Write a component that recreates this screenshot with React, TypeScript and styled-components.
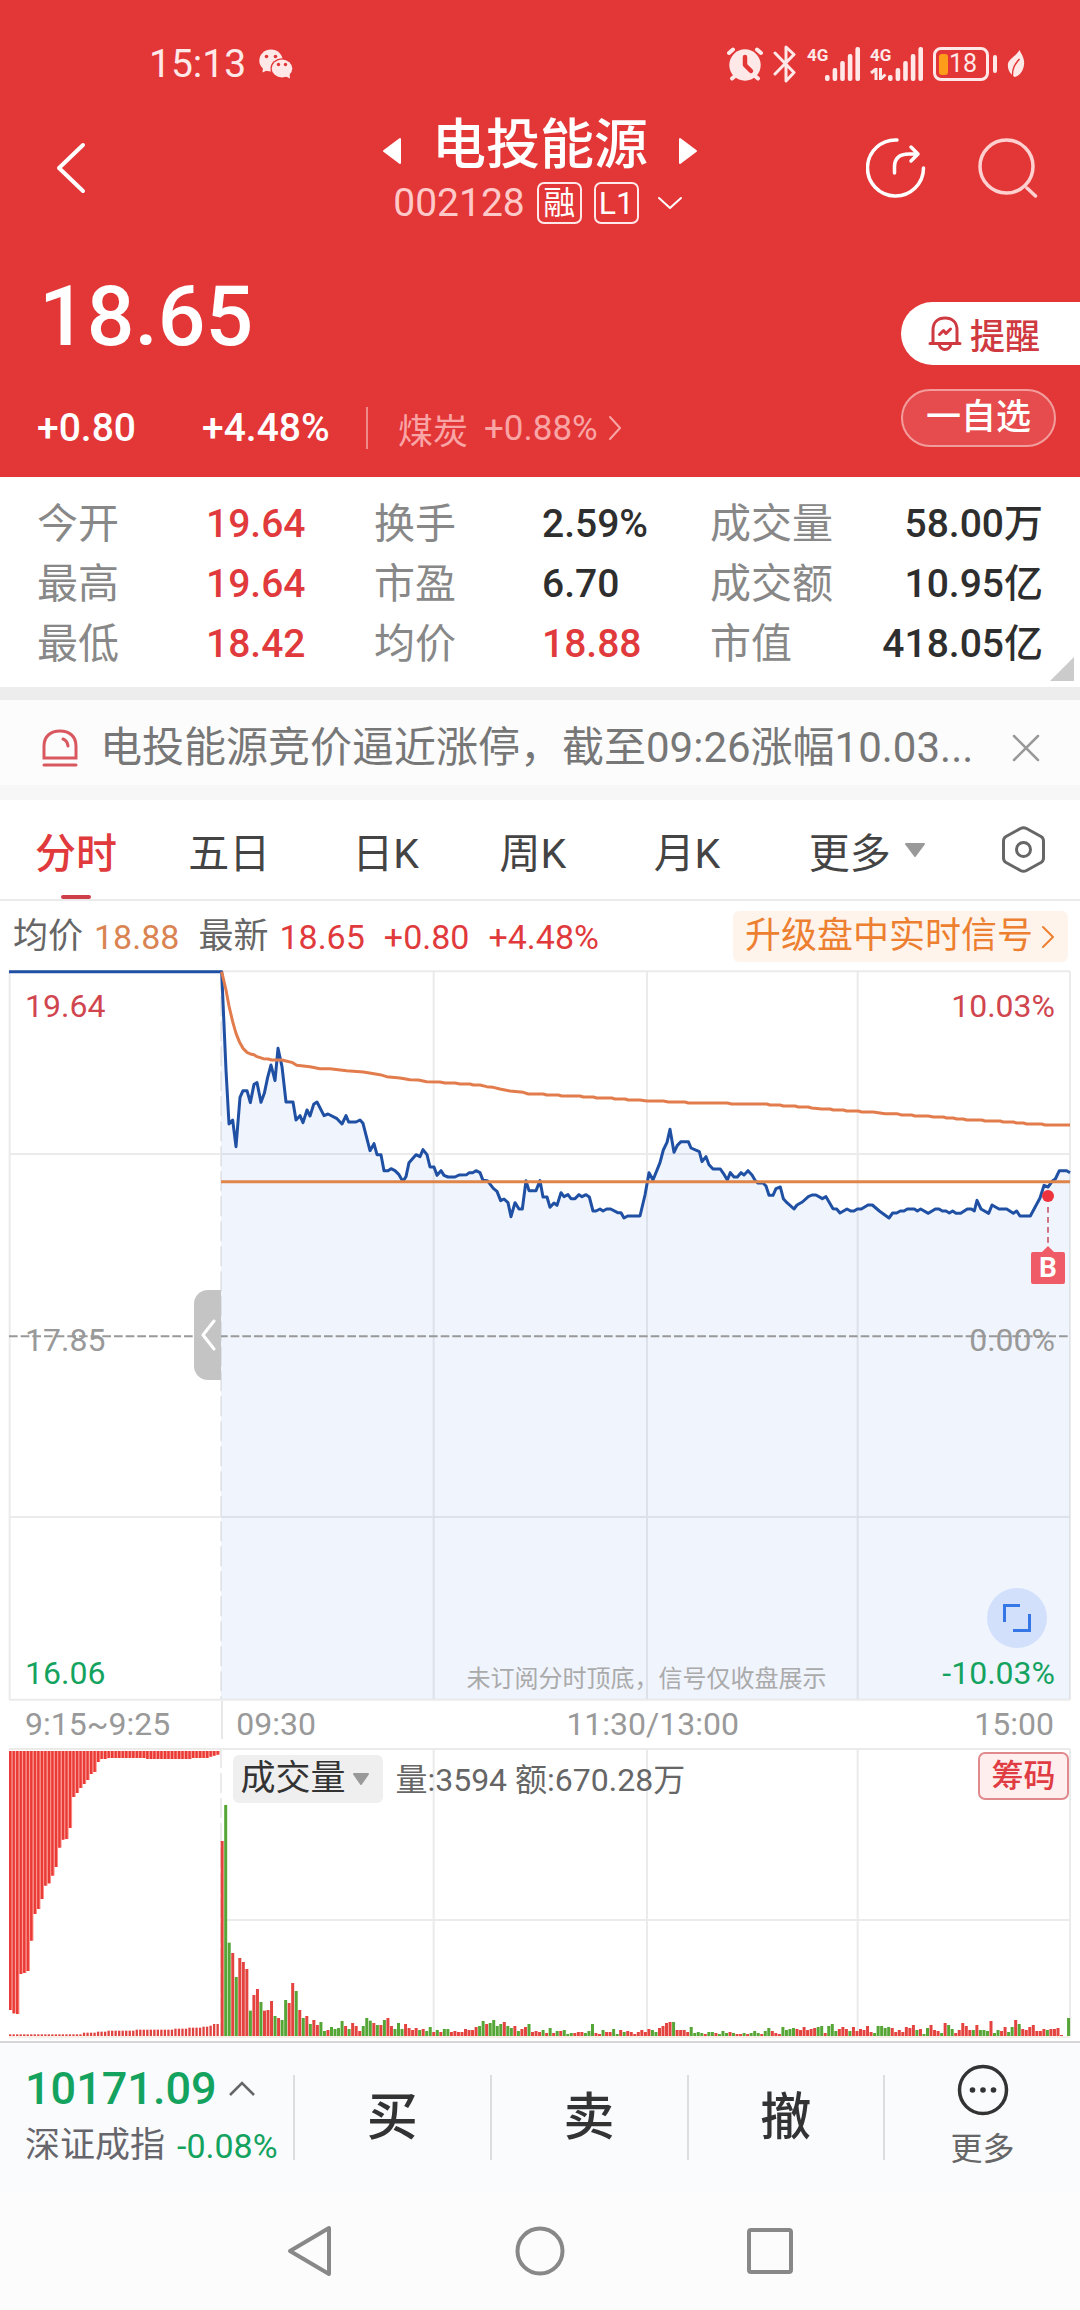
import React from "react";
import styled, { createGlobalStyle } from "styled-components";

/* ---------- data ---------- */

const RED = "#e13a3c";
const GREEN = "#14a35f";

type Tone = "red" | "dark";
type Stat = { label: string; value: string; tone: Tone };

const STATS: Stat[][] = [
  [
    { label: "今开", value: "19.64", tone: "red" },
    { label: "换手", value: "2.59%", tone: "dark" },
    { label: "成交量", value: "58.00万", tone: "dark" },
  ],
  [
    { label: "最高", value: "19.64", tone: "red" },
    { label: "市盈", value: "6.70", tone: "dark" },
    { label: "成交额", value: "10.95亿", tone: "dark" },
  ],
  [
    { label: "最低", value: "18.42", tone: "red" },
    { label: "均价", value: "18.88", tone: "red" },
    { label: "市值", value: "418.05亿", tone: "dark" },
  ],
];

const TABS = ["分时", "五日", "日K", "周K", "月K"];

/* Chart drawings use three units for each pixel of a 1080-pixel wide page. */
const W = 3240;
const LEFT = 27;
const OPEN = 663;
const RIGHT = 3210;
const COLS = [1301, 1941, 2573];

const PRICE_AM =
  "65,35 78,330 87,492 98,480 108,560 120,412 129,392 141,392 151,428 162,373 171,368 183,427 193,400 203,352 213,315 225,362 234,265 246,320 258,426 279,426 288,480 300,467 309,488 321,450 330,468 341,433 351,426 372,467 384,462 411,476 426,492 438,467 446,486 468,486 480,480 489,490 510,572 522,551 531,584 543,584 552,632 564,632 573,626 585,632 597,644 606,660 612,659 618,650 627,608 648,584 660,590 669,569 681,584 690,621 702,621 711,646 723,632 732,646 744,651 765,651 777,645 800,644 808,638 818,638 828,632 840,638 849,661 862,662 880,685 891,694 902,722 912,717 924,728 933,770 945,728 957,747 967,747 978,662 987,692 1008,692 1020,662 1029,711 1041,711 1050,742 1062,729 1071,736 1083,698 1092,710 1104,704 1113,716 1125,716 1137,704 1146,710 1158,704 1168,711 1179,753 1188,753 1200,747 1209,753 1220,747 1232,747 1253,758 1263,758 1272,774 1283,768 1314,768";
const PRICE_PM =
  "0,768 15,705 27,638 39,660 60,608 70,570 81,547 90,508 102,577 112,556 123,545 145,545 153,564 178,575 186,605 198,590 207,614 219,627 241,627 250,640 262,660 271,638 282,651 292,651 303,638 312,645 324,632 336,645 346,662 354,669 369,669 378,678 387,706 399,706 408,686 421,681 430,716 441,728 462,747 471,735 487,726 505,710 516,705 528,705 547,716 558,710 579,746 590,747 600,759 621,747 632,753 642,753 652,747 664,747 684,735 697,735 718,753 747,774 758,759 770,759 781,753 792,753 802,747 823,747 832,753 842,747 865,760 886,747 897,747 907,753 918,753 928,759 938,753 948,760 962,760 982,747 994,747 1003,753 1011,721 1023,747 1046,760 1056,735 1077,747 1100,747 1120,760 1130,753 1140,768 1171,768 1200,714 1212,676 1224,681 1238,662 1246,657 1258,632 1280,632 1290,638";
const AVERAGE_AM =
  "65,35 78,90 87,138 98,185 108,220 118,245 129,265 141,277 151,282 162,284 171,290 190,296 205,297 215,300 246,300 278,308 290,316 330,320 360,326 390,326 440,332 490,336 540,344 560,350 600,354 630,359 655,360 680,365 720,366 735,369 765,369 780,372 810,372 820,375 840,375 860,380 880,382 900,387 930,393 970,397 985,402 1030,402 1040,405 1075,405 1085,408 1140,408 1150,411 1180,411 1190,414 1235,414 1245,417 1275,417 1285,420 1320,420";
const AVERAGE_PM =
  "20,423 70,423 85,426 135,426 145,429 262,429 275,432 380,432 390,435 420,435 430,438 465,438 475,441 505,441 515,444 545,447 570,447 580,450 610,450 620,453 655,453 665,456 700,456 735,461 770,461 785,465 815,465 825,468 865,468 880,471 910,471 920,474 940,474 950,477 970,477 980,480 1025,480 1035,483 1080,483 1090,486 1120,486 1130,489 1150,489 1160,492 1205,492 1215,495 1290,495";

const shift = (points: string, dx: number, dy: number) =>
  points
    .split(" ")
    .map((p) => {
      const [x, y] = p.split(",").map(Number);
      return `${x + dx},${y + dy}`;
    })
    .join(" ");

const PRICE = `${LEFT},5 ${shift(PRICE_AM, 600, -30)} ${shift(PRICE_PM, 1920, -30)}`;
const AVERAGE = `${shift(AVERAGE_AM, 600, -30)} ${shift(AVERAGE_PM, 1920, -30)}`;
const PRICE_AREA = `${OPEN},5 ${shift(PRICE_AM, 600, -30)} ${shift(PRICE_PM, 1920, -30)} ${RIGHT},2187 ${OPEN},2187`;

/* Each minute: colour of the bar and the level of its top. */
const VOLUME =
  "R303 G195 G608 R639 G711 R654 R666 R687 G812 R765 R747 G786 R812 R810 R783 G828 R834 G840 G780 R789 R729 G753 R810 G834 R828 G852 R840 R855 G846 G873 R870 G861 G867 G864 G843 R858 G867 R849 R858 R873 G858 G834 G842 R849 G855 R855 G840 R834 R858 G867 G849 G867 R852 R864 R870 R864 G870 R867 G873 G861 R876 G870 R876 G867 G867 R876 R873 R876 R876 R867 R870 R870 R861 G858 G843 R852 G849 G840 G858 G852 R846 G858 G864 R858 G873 R867 R861 G852 R876 R873 R876 G870 R879 G864 R879 G873 R873 G870 G882 G879 R879 R876 R876 G879 G873 G852 R879 R882 G870 R876 R876 G867 G882 R870 G876 R873 R876 R882 R876 R870 R876 R867 G870 G876 R864 R858 R849 R846 G846 R870 R870 R870 R876 G861 G879 G876 G879 R882 G876 G876 R879 G882 G873 G879 R876 G879 R882 R882 G879 R882 G879 G873 G879 R882 G873 G864 R873 R879 R882 G861 G870 G867 G864 R867 R870 R861 R870 R867 R864 G861 G858 R879 G858 G852 G873 R867 R861 R867 G873 R861 R873 R867 R870 R858 R876 G879 G858 G858 G864 G861 R864 R876 R870 R876 R861 R864 R855 G870 R867 G882 G864 R855 R870 R873 G879 R849 G855 G867 R879 R870 R849 R858 R870 G870 R855 G870 G870 G873 R843 G879 G870 R873 R861 G876 G861 R840 G852 R867 R870 R861 R855 R873 R873 R867 G870 R867 R867 R864 R885 R888 G834"
    .split(" ")
    .map((b) => ({ up: b[0] === "R", top: Number(b.slice(1)) }));

const AUCTION_TOP = [
  810, 820, 822, 702, 699, 693, 602, 522, 507, 477, 437, 430, 407, 381, 323, 299, 297, 264, 171, 159,
  144, 132, 120, 102, 96, 66, 57, 57, 54, 54, 54, 54, 54, 54, 54, 54, 54, 54, 54, 57,
  57, 57, 57, 57, 57, 57, 57, 57, 57, 57, 57, 57, 54, 54, 54, 54, 54, 50, 47, 44,
];
const AUCTION_BOTTOM = AUCTION_TOP.map((_, i) => {
  const steps: [number, number][] = [
    [21, 883], [25, 878], [28, 875], [36, 872], [47, 869], [51, 866], [55, 863], [57, 860], [58, 857],
  ];
  const hit = steps.find(([end]) => i < end);
  return hit ? hit[1] : 852;
});

/* ---------- page ---------- */

const Global = createGlobalStyle`
  *, *::before, *::after { box-sizing: border-box; }
  body {
    margin: 0;
    background: #fcfcfc;
    font-family: Roboto, "Noto Sans CJK SC", sans-serif;
    color: #333;
  }
  button, h1, p { margin: 0; padding: 0; font: inherit; }
  button { border: 0; background: none; color: inherit; cursor: pointer; white-space: nowrap; }
  svg { display: block; flex: none; }
`;

const Page = styled.div`
  display: flex;
  flex-direction: column;
  background: #fff;
`;

/* ---------- header ---------- */

const Header = styled.header`
  background: #e33637;
  color: #fff;
`;

const StatusBar = styled.div`
  display: flex;
  align-items: center;
  justify-content: space-between;
  height: 104px;
  padding: 24px 55px 0 149px;
  color: #ffe8e8;
`;

const StatusGroup = styled.div<{ $gap: number }>`
  display: flex;
  align-items: center;
  gap: ${(p) => p.$gap}px;
`;

const Clock = styled.time`
  font-size: 39px;
  line-height: 44px;
`;

const Signal = styled.div`
  display: flex;
  align-items: flex-end;
`;

const Network = styled.div`
  display: flex;
  flex-direction: column;
  height: 34px;
  width: 18px;
  gap: 4px;
  font-size: 17px;
  line-height: 17px;
  font-weight: 700;
`;

const Battery = styled.div`
  display: flex;
  align-items: center;
  gap: 4px;
  &::after {
    content: "";
    width: 4px;
    height: 18px;
    border-radius: 2px;
    background: #ffe8e8;
  }
`;

const BatteryBody = styled.div`
  display: flex;
  align-items: center;
  width: 56px;
  height: 34px;
  padding: 0 3px;
  border: 3px solid #ffe8e8;
  border-radius: 8px;
  font-size: 25px;
  line-height: 28px;
  &::before {
    content: "";
    width: 9px;
    height: 21px;
    margin-right: 1px;
    border-radius: 3px;
    background: #ff9c1a;
  }
`;

const NavRow = styled.nav`
  display: grid;
  grid-template-columns: 1fr auto 1fr;
  align-items: center;
  height: 128px;
  padding: 0 42px;
`;

const IconButton = styled.button`
  display: flex;
  align-items: center;
  justify-content: center;
`;

const BackButton = styled(IconButton)`
  padding-left: 13px;
`;

const StepButton = styled(IconButton)`
  padding-top: 10px;
`;

const NavActions = styled.div`
  display: flex;
  justify-content: flex-end;
  gap: 52px;
`;

const TitleBlock = styled.div`
  display: flex;
  flex-direction: column;
  align-items: center;
  gap: 6px;
  padding-top: 4px;
`;

const TitleRow = styled.div`
  display: flex;
  align-items: center;
  gap: 30px;
`;

const Title = styled.h1`
  font-size: 54px;
  line-height: 60px;
  font-weight: 500;
`;

const CodeRow = styled.div`
  display: flex;
  align-items: center;
  gap: 12px;
`;

const Code = styled.span`
  font-size: 39px;
  line-height: 42px;
  color: #ffc9c9;
`;

const Badge = styled.span`
  display: flex;
  align-items: center;
  justify-content: center;
  width: 45px;
  height: 42px;
  border: 2px solid #ffe8e8;
  border-radius: 7px;
  font-size: 32px;
  line-height: 36px;
`;

const Quote = styled.section`
  display: flex;
  justify-content: space-between;
  padding: 40px 0 28px 37px;
`;

const Price = styled.div`
  padding-left: 2px;
  font-size: 84px;
  line-height: 90px;
  font-weight: 500;
`;

const ChangeRow = styled.div`
  display: flex;
  align-items: center;
  height: 42px;
  margin-top: 45px;
  font-size: 39px;
  font-weight: 500;
`;

const Change = styled.span<{ $width: number }>`
  width: ${(p) => p.$width}px;
`;

const Sector = styled.a`
  display: flex;
  align-items: center;
  gap: 10px;
  height: 42px;
  padding-left: 30px;
  border-left: 2px solid #f08a8a;
  color: #f9a5a6;
  font-size: 35px;
  font-weight: 400;
  text-decoration: none;
`;

const SectorName = styled.span`
  margin-right: 6px;
`;

const QuoteActions = styled.div`
  display: flex;
  flex-direction: column;
  gap: 24px;
  width: 179px;
  padding-top: 30px;
`;

const AlertButton = styled.button`
  display: flex;
  align-items: center;
  gap: 8px;
  height: 63px;
  padding-left: 27px;
  border-radius: 32px 0 0 32px;
  background: #fff;
  color: #cf3a41;
  font-size: 35px;
  font-weight: 500;
`;

const WatchButton = styled.button`
  width: 155px;
  height: 58px;
  border: 2px solid #f39c9c;
  border-radius: 29px;
  background: #e64c4d;
  font-size: 35px;
  line-height: 54px;
  font-weight: 500;
`;

/* ---------- statistics ---------- */

const StatsPanel = styled.section`
  position: relative;
  padding: 17px 37px 13px;
  border-bottom: 13px solid #ededed;
  &::after {
    content: "";
    position: absolute;
    right: 6px;
    bottom: 6px;
    border-style: solid;
    border-width: 0 0 24px 24px;
    border-color: transparent transparent #cbcbcb transparent;
  }
`;

const StatsTable = styled.table`
  width: 100%;
  table-layout: fixed;
  border-collapse: collapse;
`;

const StatLabel = styled.th`
  height: 60px;
  padding: 0;
  color: #888;
  font-size: 41px;
  line-height: 60px;
  font-weight: 400;
  text-align: left;
  white-space: nowrap;
`;

const StatValue = styled.td<{ $tone: Tone; $end: boolean }>`
  padding: 0;
  color: ${(p) => (p.$tone === "red" ? RED : "#2e2e2e")};
  font-size: 39px;
  line-height: 60px;
  font-weight: 500;
  text-align: ${(p) => (p.$end ? "right" : "left")};
  white-space: nowrap;
`;

/* ---------- notice ---------- */

const Notice = styled.section`
  display: flex;
  align-items: center;
  height: 100px;
  padding: 10px 40px 0 42px;
  border-bottom: 15px solid #f7f7f7;
  background: #fcfcfc;
`;

const NoticeText = styled.p`
  flex: 1;
  min-width: 0;
  margin: 0 22px;
  overflow: hidden;
  color: #777;
  font-size: 42px;
  line-height: 60px;
  white-space: nowrap;
  text-overflow: ellipsis;
`;

/* ---------- tabs ---------- */

const Tabs = styled.nav`
  display: grid;
  grid-template-columns: 153fr 164fr 147fr 154fr 155fr 193fr auto;
  height: 101px;
  padding: 0 35px;
  border-bottom: 2px solid #ebebeb;
`;

const Tab = styled.button<{ $active?: boolean }>`
  position: relative;
  justify-self: start;
  display: flex;
  align-items: center;
  gap: 14px;
  color: ${(p) => (p.$active ? RED : "#444")};
  font-size: 41px;
  font-weight: ${(p) => (p.$active ? 500 : 400)};
  &::after {
    content: "";
    display: ${(p) => (p.$active ? "block" : "none")};
    position: absolute;
    left: 50%;
    bottom: 0;
    width: 30px;
    height: 4px;
    margin-left: -15px;
    border-radius: 2px;
    background: #cf3f49;
  }
`;

/* ---------- legend ---------- */

const Legend = styled.div`
  display: flex;
  align-items: center;
  justify-content: space-between;
  height: 69px;
  padding: 2px 12px 0 13px;
`;

const LegendItems = styled.div`
  display: flex;
  align-items: center;
  gap: 19px;
  color: ${RED};
  font-size: 34px;
  line-height: 50px;
`;

const LegendItem = styled.span<{ $color?: string }>`
  display: flex;
  gap: 11px;
  color: ${(p) => p.$color ?? RED};
`;

const LegendName = styled.span`
  color: #666;
  font-size: 35px;
`;

const UpgradeLink = styled.a`
  display: flex;
  align-items: center;
  gap: 8px;
  height: 51px;
  padding: 0 13px 0 12px;
  border-radius: 6px;
  background: #fff4ec;
  color: #ec8030;
  font-size: 36px;
  line-height: 51px;
  text-decoration: none;
`;

/* ---------- charts ---------- */

const ChartFrame = styled.section<{ $height: number }>`
  position: relative;
  height: ${(p) => p.$height}px;
`;

const Plot = styled.svg`
  width: 100%;
  height: 100%;
`;

const Overlay = styled.div`
  position: absolute;
  inset: 0 25px;
  display: flex;
  flex-direction: column;
  justify-content: space-between;
  padding: 16px 0 8px;
`;

const Level = styled.div<{ $color: string }>`
  display: flex;
  align-items: center;
  justify-content: space-between;
  color: ${(p) => p.$color};
  font-size: 32px;
  line-height: 40px;
`;

const Watermark = styled.p`
  position: absolute;
  left: 43%;
  bottom: 8px;
  padding-left: 2px;
  color: #aaa;
  font-size: 24px;
  line-height: 28px;
`;

const Handle = styled.button`
  position: absolute;
  top: 320px;
  right: 79.5%;
  display: flex;
  align-items: center;
  justify-content: flex-end;
  width: 27px;
  height: 90px;
  padding-right: 5px;
  border-radius: 14px 0 0 14px;
  background: #c4c4c4;
  color: #fff;
`;

const ExpandButton = styled.button`
  position: absolute;
  right: 33px;
  bottom: 53px;
  display: flex;
  align-items: center;
  justify-content: center;
  width: 60px;
  height: 60px;
  border-radius: 50%;
  background: #d2e0fc;
`;

const TradeFlag = styled.div`
  position: absolute;
  top: 282px;
  right: 15px;
  width: 34px;
  height: 32px;
  border-radius: 2px;
  background: #ef5b67;
  color: #fff;
  font-size: 28px;
  line-height: 32px;
  font-weight: 700;
  text-align: center;
  &::before {
    content: "";
    position: absolute;
    left: 11px;
    top: -6px;
    border-style: solid;
    border-width: 0 6px 6px;
    border-color: transparent transparent #ef5b67;
  }
`;

const TimeAxis = styled.div`
  display: grid;
  grid-template-columns: 20.5% 1fr auto 1fr;
  align-items: center;
  height: 47px;
  padding-right: 10px;
  color: #999;
  font-size: 32px;
  line-height: 47px;
  background: linear-gradient(#e8e8e8, #e8e8e8) 20.5% 0 / 2px 38px no-repeat;
`;

const TimeLabel = styled.span<{ $place: "first" | "open" | "mid" | "close" }>`
  padding: ${(p) => ({ first: "0 0 0 25px", open: "0 0 0 17px", mid: "0 0 0 16px", close: "0 16px 0 0" })[p.$place]};
  text-align: ${(p) => (p.$place === "close" ? "right" : "left")};
`;

const VolumeHead = styled.div`
  position: absolute;
  top: 4px;
  left: calc(20.5% + 12px);
  right: 11px;
  display: flex;
  align-items: flex-start;
`;

const IndicatorButton = styled.button`
  display: flex;
  align-items: center;
  gap: 8px;
  height: 48px;
  margin-top: 3px;
  padding: 0 14px 0 7px;
  border-radius: 6px;
  background: #efefef;
  font-size: 35px;
  line-height: 48px;
`;

const VolumeText = styled.p`
  padding: 4px 0 0 12px;
  color: #666;
  font-size: 32px;
  line-height: 48px;
`;

const ChipsButton = styled.button`
  width: 91px;
  height: 48px;
  margin-left: auto;
  border: 2px solid #e08a8d;
  border-radius: 7px;
  background: #ffeeee;
  color: #df3c44;
  font-size: 32px;
  line-height: 44px;
  font-weight: 500;
`;

/* ---------- bottom ---------- */

const ActionBar = styled.footer`
  display: grid;
  grid-template-columns: 293px repeat(4, 1fr);
  grid-template-rows: 85px;
  height: 151px;
  padding: 32px 0;
  border-top: 2px solid #d6d6da;
  background: #fafbfd;
`;

const IndexButton = styled.button`
  display: flex;
  flex-direction: column;
  justify-content: center;
  gap: 11px;
  padding-left: 25px;
`;

const IndexLine = styled.span<{ $size: number }>`
  display: flex;
  align-items: center;
  gap: 12px;
  color: ${GREEN};
  font-size: ${(p) => p.$size}px;
  line-height: 46px;
  font-weight: ${(p) => (p.$size > 40 ? 500 : 400)};
`;

const IndexName = styled.span`
  color: #66666c;
  font-size: 35px;
`;

const TradeButton = styled.button`
  border-left: 2px solid #dcdde0;
  color: #333;
  font-size: 51px;
  line-height: 85px;
  font-weight: 500;
`;

const MoreButton = styled.button`
  display: flex;
  flex-direction: column;
  align-items: center;
  justify-content: center;
  gap: 11px;
  border-left: 2px solid #dcdde0;
  color: #666;
  font-size: 32px;
  line-height: 44px;
`;

const SystemBar = styled.nav`
  display: flex;
  align-items: center;
  justify-content: center;
  gap: 182px;
  height: 118px;
  background: #fcfcfc;
`;

/* ---------- drawings ---------- */

const Chevron = ({ w, h, d, width = 3 }: { w: number; h: number; d: string; width?: number }) => (
  <svg width={w} height={h} viewBox={`0 0 ${w} ${h}`} fill="none" stroke="currentColor" strokeWidth={width} strokeLinecap="round" strokeLinejoin="round" aria-hidden="true">
    <path d={d} />
  </svg>
);

const Triangle = ({ w, h, points, color = "currentColor" }: { w: number; h: number; points: string; color?: string }) => (
  <svg width={w} height={h} viewBox={`0 0 ${w} ${h}`} aria-hidden="true">
    <polygon points={points} fill={color} stroke={color} strokeWidth="2" strokeLinejoin="round" />
  </svg>
);

const WechatIcon = () => (
  <svg width="34" height="30" viewBox="0 0 34 30" aria-hidden="true">
    <path d="M4 18 L3.5 23.5 L9 21 Z" fill="currentColor" />
    <ellipse cx="12" cy="11.5" rx="11.7" ry="11" fill="currentColor" />
    <ellipse cx="23" cy="19.5" rx="11.5" ry="10.2" fill="#e33637" />
    <ellipse cx="23" cy="19.5" rx="10.3" ry="9" fill="currentColor" />
    <path d="M26 27 L31 29.5 L30.5 24 Z" fill="currentColor" />
    <g fill="#e33637">
      <circle cx="7.5" cy="7.5" r="1.8" />
      <circle cx="16.5" cy="7.5" r="1.8" />
      <circle cx="19.5" cy="15.5" r="1.7" />
      <circle cx="26.5" cy="15.5" r="1.7" />
    </g>
  </svg>
);

const AlarmIcon = () => (
  <svg width="36" height="35" viewBox="0 0 36 35" fill="none" stroke="currentColor" strokeLinecap="round" aria-hidden="true">
    <circle cx="18" cy="18" r="15.7" fill="currentColor" stroke="none" />
    <path d="M2 6 L6 2.5 M34 6 L30 2.5" strokeWidth="4" />
    <path d="M5 31.5 L8 29 M31 31.5 L28 29" strokeWidth="4" />
    <path d="M18 10 V18 L24 24" stroke="#e33637" strokeWidth="4.5" strokeLinejoin="round" />
  </svg>
);

const BluetoothIcon = () => (
  <svg width="24" height="38" viewBox="0 0 24 38" fill="none" stroke="currentColor" strokeWidth="3" strokeLinecap="round" strokeLinejoin="round" aria-hidden="true">
    <path d="M2 8 L21 27.5 L13 36 V2 L21 9.5 L2 29" />
  </svg>
);

const BarsIcon = () => (
  <svg width="35" height="34" viewBox="0 0 35 34" fill="currentColor" aria-hidden="true">
    {[6, 13, 20, 27, 34].map((h, i) => (
      <rect key={h} x={i * 7.6} y={34 - h} width="4.6" height={h} rx="2" />
    ))}
  </svg>
);

const DataArrows = () => (
  <svg width="17" height="12" viewBox="0 0 17 12" fill="none" stroke="currentColor" strokeWidth="3" aria-hidden="true">
    <path d="M1 5 L6 1 V12 M10.5 0 V11 L15.5 6.5" />
  </svg>
);

const LeafIcon = () => (
  <svg width="18" height="28" viewBox="0 0 18 28" aria-hidden="true">
    <path d="M12.5 0 C14 4 18 8 17 15 C16 22 12 26 7.5 27 C5 25 0 21 1 13.5 C2 9 10 5 12.5 0 Z" fill="currentColor" />
    <path d="M12.5 9 C8 14 5 18 5.5 27" fill="none" stroke="#e33637" strokeWidth="1.5" />
  </svg>
);

const ShareIcon = () => (
  <svg width="60" height="60" viewBox="0 0 60 60" fill="none" stroke="#fff" strokeWidth="3.5" strokeLinecap="round" strokeLinejoin="round" aria-hidden="true">
    <path d="M31 2 A28 28 0 1 0 57.5 30" />
    <path d="M28.5 35 V29 C28.5 20 34 16 43 16 H52 M45 9 L52 16 L45 23" />
  </svg>
);

const SearchIcon = () => (
  <svg width="60" height="60" viewBox="0 0 60 60" fill="none" stroke="#ffd0d0" strokeWidth="3.5" strokeLinecap="round" aria-hidden="true">
    <circle cx="28.5" cy="28.5" r="26.5" />
    <path d="M49 50 L57.5 58" />
  </svg>
);

const BellIcon = () => (
  <svg width="34" height="35" viewBox="0 0 34 35" fill="none" stroke="currentColor" strokeWidth="3" strokeLinecap="round" strokeLinejoin="round" aria-hidden="true">
    <path d="M2 27.5 H32 M5 27 V14 C5 6 10 2 17 2 C24 2 29 6 29 14 V27" />
    <path d="M11 28 C12 32 14 33.5 17 33.5 C20 33.5 22 32 23 28" />
    <path d="M11.5 18.5 L15.5 14.5 L18 17.5 L22.5 13" />
  </svg>
);

const SirenIcon = () => (
  <svg width="36" height="38" viewBox="0 0 36 38" fill="none" stroke="#d9585f" strokeWidth="3" strokeLinecap="round" aria-hidden="true">
    <path d="M2 29 V17 C2 7 9 2 18 2 C27 2 34 7 34 17 V29 Z M2 36 H34" />
    <path d="M21 10 C24 11 25.5 13 26 17" />
  </svg>
);

const HexIcon = () => (
  <svg width="43" height="47" viewBox="0 0 43 47" fill="none" stroke="#666" strokeWidth="3" strokeLinejoin="round" aria-hidden="true">
    <path d="M18.5 2.5 Q21.5 1 24.5 2.5 L39 10.5 Q41.5 12 41.5 15 V32 Q41.5 35 39 36.5 L24.5 44.5 Q21.5 46 18.5 44.5 L4 36.5 Q1.5 35 1.5 32 V15 Q1.5 12 4 10.5 Z" />
    <circle cx="21.5" cy="23.5" r="7" />
  </svg>
);

const MoreIcon = () => (
  <svg width="52" height="52" viewBox="0 0 52 52" fill="#333" aria-hidden="true">
    <circle cx="26" cy="26" r="23.5" fill="none" stroke="#333" strokeWidth="3.5" />
    <circle cx="15.5" cy="26" r="2.8" />
    <circle cx="26" cy="26" r="2.8" />
    <circle cx="36.5" cy="26" r="2.8" />
  </svg>
);

const PricePlot = () => (
  <Plot viewBox={`0 0 ${W} 2193`} preserveAspectRatio="none" role="img" aria-label="分时走势">
    <g stroke="#ebebeb" strokeWidth="6" fill="none">
      <path d={`M${LEFT} 4 H${RIGHT} M${LEFT} 552 H${RIGHT} M${LEFT} 1641 H${RIGHT} M${LEFT} 2189 H${RIGHT}`} />
      <path d={`M${LEFT + 2} 4 V2189 M${RIGHT} 4 V2189 ${COLS.map((x) => `M${x} 4 V2189`).join(" ")}`} />
      <path d={`M${OPEN} 4 V2189`} strokeDasharray="60 15" />
    </g>
    <polygon points={PRICE_AREA} fill="#3f78ea" fillOpacity="0.08" />
    <path d={`M${LEFT} 1099 H${RIGHT}`} stroke="#999" strokeWidth="6" strokeDasharray="26 9" />
    <polyline points={PRICE} fill="none" stroke="#1f50a3" strokeWidth="9" strokeLinejoin="round" />
    <polyline points={AVERAGE} fill="none" stroke="#e27c4c" strokeWidth="9" strokeLinejoin="round" />
    <path d={`M${OPEN} 635 H${RIGHT}`} stroke="#e0854a" strokeWidth="9" />
    <path d="M3144 711 V818" stroke="#c95a6c" strokeWidth="5" strokeDasharray="17 13" />
    <circle cx="3144" cy="678" r="18" fill="#ee333f" />
  </Plot>
);

const VolumePlot = () => (
  <Plot viewBox={`0 24 ${W} 879`} preserveAspectRatio="none" role="img" aria-label="成交量柱状图">
    <g stroke="#ebebeb" strokeWidth="6" fill="none">
      <path d={`M${LEFT} 27 H${RIGHT} M${OPEN} 540 H${RIGHT}`} />
      <path d={`M${RIGHT} 27 V888 ${COLS.map((x) => `M${x} 27 V888`).join(" ")}`} />
      <path d={`M${OPEN} 27 V888`} strokeDasharray="60 15" strokeDashoffset="3" />
      <path d={`M${LEFT} 891 H${RIGHT}`} stroke="#f7efe8" />
    </g>
    {AUCTION_TOP.map((bottom, i) => {
      const x = 27 + i * 10.55;
      return (
        <g key={i}>
          <rect x={x} y="33" width="10" height={bottom - 33} fill="#fa9089" />
          <rect x={x} y="33" width="7" height={bottom - 33} fill="#ea3a36" />
          <rect x={x} y={AUCTION_BOTTOM[i]} width="7" height={888 - AUCTION_BOTTOM[i]} fill="#e04440" />
        </g>
      );
    })}
    {VOLUME.map((bar, i) => (
      <rect key={i} x={662 + i * 10.58} y={bar.top} width="9" height={888 - bar.top} fill={bar.up ? "#e4443f" : "#55a636"} />
    ))}
  </Plot>
);

/* ---------- app ---------- */

export default function App() {
  return (
    <Page>
      <Global />
      <Header>
        <StatusBar>
          <StatusGroup $gap={13}>
            <Clock>15:13</Clock>
            <WechatIcon />
          </StatusGroup>
          <StatusGroup $gap={10}>
            <AlarmIcon />
            <BluetoothIcon />
            <Signal>
              <Network>4G</Network>
              <BarsIcon />
            </Signal>
            <Signal>
              <Network>
                4G
                <DataArrows />
              </Network>
              <BarsIcon />
            </Signal>
            <Battery>
              <BatteryBody>18</BatteryBody>
            </Battery>
            <LeafIcon />
          </StatusGroup>
        </StatusBar>

        <NavRow>
          <div>
            <BackButton aria-label="返回">
              <Chevron w={32} h={52} d="M28 3 L4 26 L28 49" width={4} />
            </BackButton>
          </div>
          <TitleBlock>
            <TitleRow>
              <StepButton aria-label="上一只">
                <Triangle w={20} h={28} points="18,2 18,26 2,14" />
              </StepButton>
              <Title>电投能源</Title>
              <StepButton aria-label="下一只">
                <Triangle w={20} h={28} points="2,2 2,26 18,14" />
              </StepButton>
            </TitleRow>
            <CodeRow>
              <Code>002128</Code>
              <Badge>融</Badge>
              <Badge>L1</Badge>
              <IconButton aria-label="展开">
                <Chevron w={36} h={16} d="M8 3 L19 13 L30 3" width={2} />
              </IconButton>
            </CodeRow>
          </TitleBlock>
          <NavActions>
            <IconButton aria-label="分享">
              <ShareIcon />
            </IconButton>
            <IconButton aria-label="搜索">
              <SearchIcon />
            </IconButton>
          </NavActions>
        </NavRow>

        <Quote>
          <div>
            <Price>18.65</Price>
            <ChangeRow>
              <Change $width={165}>+0.80</Change>
              <Change $width={164}>+4.48%</Change>
              <Sector href="#sector">
                <SectorName>煤炭</SectorName>
                +0.88%
                <Chevron w={14} h={26} d="M2 2 L12 13 L2 24" width={2} />
              </Sector>
            </ChangeRow>
          </div>
          <QuoteActions>
            <AlertButton>
              <BellIcon />
              提醒
            </AlertButton>
            <WatchButton>一自选</WatchButton>
          </QuoteActions>
        </Quote>
      </Header>

      <StatsPanel>
        <StatsTable>
          <colgroup>
            {["16.8%", "16.7%", "16.7%", "16.7%", "13.3%", "19.8%"].map((width, i) => (
              <col key={i} width={width} />
            ))}
          </colgroup>
          <tbody>
            {STATS.map((row) => (
              <tr key={row[0].label}>
                {row.map((stat, i) => (
                  <React.Fragment key={stat.label}>
                    <StatLabel scope="row">{stat.label}</StatLabel>
                    <StatValue $tone={stat.tone} $end={i === 2}>
                      {stat.value}
                    </StatValue>
                  </React.Fragment>
                ))}
              </tr>
            ))}
          </tbody>
        </StatsTable>
      </StatsPanel>

      <Notice>
        <SirenIcon />
        <NoticeText>电投能源竞价逼近涨停，截至09:26涨幅10.03...</NoticeText>
        <IconButton aria-label="关闭">
          <svg width="28" height="28" viewBox="0 0 28 28" stroke="#999" strokeWidth="2.5" strokeLinecap="round" aria-hidden="true">
            <path d="M2 2 L26 26 M26 2 L2 26" />
          </svg>
        </IconButton>
      </Notice>

      <Tabs>
        {TABS.map((name, i) => (
          <Tab key={name} $active={i === 0}>
            {name}
          </Tab>
        ))}
        <Tab>
          更多
          <Triangle w={20} h={14} points="1,1 19,1 10,13" color="#999" />
        </Tab>
        <IconButton aria-label="设置">
          <HexIcon />
        </IconButton>
      </Tabs>

      <Legend>
        <LegendItems>
          <LegendItem $color="#d98452">
            <LegendName>均价</LegendName>18.88
          </LegendItem>
          <LegendItem>
            <LegendName>最新</LegendName>18.65
          </LegendItem>
          <LegendItem>+0.80</LegendItem>
          <LegendItem>+4.48%</LegendItem>
        </LegendItems>
        <UpgradeLink href="#upgrade">
          升级盘中实时信号
          <Chevron w={14} h={24} d="M2 2 L12 12 L2 22" width={2} />
        </UpgradeLink>
      </Legend>

      <ChartFrame $height={731}>
        <PricePlot />
        <Overlay>
          <Level $color="#d0454e">
            <span>19.64</span>
            <span>10.03%</span>
          </Level>
          <Level $color="#999">
            <span>17.85</span>
            <span>0.00%</span>
          </Level>
          <Level $color={GREEN}>
            <span>16.06</span>
            <span>-10.03%</span>
          </Level>
        </Overlay>
        <Watermark>未订阅分时顶底，信号仅收盘展示</Watermark>
        <Handle aria-label="收起竞价">
          <Chevron w={16} h={32} d="M14 2 L3 16 L14 30" width={3} />
        </Handle>
        <TradeFlag>B</TradeFlag>
        <ExpandButton aria-label="全屏">
          <svg width="30" height="30" viewBox="0 0 30 30" fill="none" stroke="#3577e5" strokeWidth="3" aria-hidden="true">
            <path d="M18 2.5 H2.5 V19 M11 27.5 H27.5 V11" />
          </svg>
        </ExpandButton>
      </ChartFrame>

      <TimeAxis>
        <TimeLabel $place="first">9:15~9:25</TimeLabel>
        <TimeLabel $place="open">09:30</TimeLabel>
        <TimeLabel $place="mid">11:30/13:00</TimeLabel>
        <TimeLabel $place="close">15:00</TimeLabel>
      </TimeAxis>

      <ChartFrame $height={293}>
        <VolumePlot />
        <VolumeHead>
          <IndicatorButton>
            成交量
            <Triangle w={16} h={12} points="1,1 15,1 8,11" color="#999" />
          </IndicatorButton>
          <VolumeText>量:3594 额:670.28万</VolumeText>
          <ChipsButton>筹码</ChipsButton>
        </VolumeHead>
      </ChartFrame>

      <ActionBar>
        <IndexButton>
          <IndexLine $size={45}>
            10171.09
            <svg width="26" height="16" viewBox="0 0 26 16" fill="none" stroke="#666" strokeWidth="2.5" aria-hidden="true">
              <path d="M1 14 L13 2 L25 14" />
            </svg>
          </IndexLine>
          <IndexLine $size={34}>
            <IndexName>深证成指</IndexName>-0.08%
          </IndexLine>
        </IndexButton>
        <TradeButton>买</TradeButton>
        <TradeButton>卖</TradeButton>
        <TradeButton>撤</TradeButton>
        <MoreButton>
          <MoreIcon />
          更多
        </MoreButton>
      </ActionBar>

      <SystemBar>
        <IconButton aria-label="系统返回">
          <svg width="46" height="52" viewBox="0 0 46 52" fill="none" stroke="#888" strokeWidth="4" strokeLinejoin="round" aria-hidden="true">
            <path d="M42 3 V49 L3 26 Z" />
          </svg>
        </IconButton>
        <IconButton aria-label="主屏幕">
          <svg width="50" height="50" viewBox="0 0 50 50" fill="none" stroke="#888" strokeWidth="4" aria-hidden="true">
            <circle cx="25" cy="25" r="22.5" />
          </svg>
        </IconButton>
        <IconButton aria-label="最近任务">
          <svg width="46" height="46" viewBox="0 0 46 46" fill="none" stroke="#888" strokeWidth="4" aria-hidden="true">
            <rect x="2" y="2" width="42" height="42" rx="2" />
          </svg>
        </IconButton>
      </SystemBar>
    </Page>
  );
}
